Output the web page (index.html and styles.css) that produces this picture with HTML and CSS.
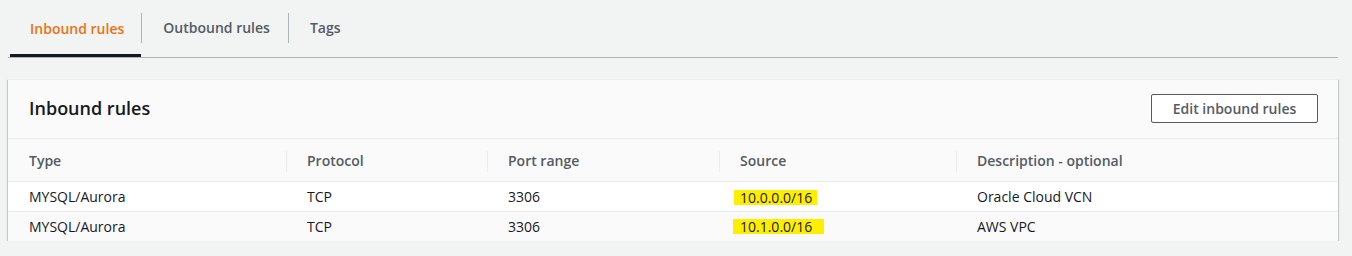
FILE: index.html
```html
<!DOCTYPE html>
<html lang="en">
<head>
    <meta charset="UTF-8">
    <title>Inbound rules</title>
    <link rel="stylesheet" href="styles.css">
</head>
<body>
    <div class="tabs">
        <div class="tab active">Inbound rules</div>
        <div class="tab">Outbound rules</div>
        <div class="tab">Tags</div>
    </div>

    <div class="card">
        <div class="card-header">
            <h2>Inbound rules</h2>
            <button class="btn">Edit inbound rules</button>
        </div>
        <table class="rules">
            <colgroup>
                <col class="c1"><col class="c2"><col class="c3"><col class="c4"><col class="c5">
            </colgroup>
            <thead>
                <tr>
                    <th>Type</th>
                    <th>Protocol</th>
                    <th>Port range</th>
                    <th>Source</th>
                    <th>Description - optional</th>
                </tr>
            </thead>
            <tbody>
                <tr>
                    <td>MYSQL/Aurora</td>
                    <td>TCP</td>
                    <td>3306</td>
                    <td><span class="mark mark-a">10.0.0.0/16</span></td>
                    <td>Oracle Cloud VCN</td>
                </tr>
                <tr>
                    <td>MYSQL/Aurora</td>
                    <td>TCP</td>
                    <td>3306</td>
                    <td><span class="mark mark-b">10.1.0.0/16</span></td>
                    <td>AWS VPC</td>
                </tr>
            </tbody>
        </table>
    </div>
</body>
</html>
```

FILE: styles.css
```css
body {
    margin: 0;
    padding: 0 14px 0 8px;
    background: #f2f3f3;
    font-family: "Open Sans", Roboto, Arial, sans-serif;
    font-size: 14px;
    color: #16191f;
}

.tabs {
    display: flex;
    height: 58px;
    border-bottom: 1px solid #aab7b8;
    box-sizing: border-box;
}

.tab {
    position: relative;
    display: flex;
    align-items: center;
    padding: 0 18px 1px 22px;
    font-weight: 600;
    color: #545b64;
    height: 56px;
    box-sizing: border-box;
}

.tab:first-child {
    margin-left: 2px;
    padding-left: 20px;
    padding-right: 17px;
}

.tab + .tab::before {
    content: "";
    position: absolute;
    left: 0;
    top: 13px;
    height: 30px;
    border-left: 1px solid #aab7b8;
}

.tab.active {
    color: #ec7211;
    border-bottom: 3px solid #16191f;
    padding-top: 4px;
    height: 57px;
}

.card {
    margin-top: 21px;
    background: #fff;
    border-top: 1px solid #eaeded;
    box-shadow: 0 1px 1px 0 rgba(0, 28, 36, 0.3), 1px 1px 1px 0 rgba(0, 28, 36, 0.15), -1px 1px 1px 0 rgba(0, 28, 36, 0.15);
    width: 1330px;
}

.card-header {
    display: flex;
    justify-content: space-between;
    align-items: center;
    height: 58px;
    padding: 0 20px 0 21px;
    background: #fafafa;
    border-bottom: 1px solid #eaeded;
}

.card-header h2 {
    margin: 0 0 2px;
    font-size: 18px;
    font-weight: 600;
}

.btn {
    width: 167px;
    height: 29px;
    padding: 0;
    background: #fff;
    border: 1px solid #545b64;
    border-radius: 2px;
    font-family: inherit;
    font-size: 14px;
    font-weight: 600;
    color: #545b64;
    margin-top: -1px;
}

.rules {
    width: 100%;
    border-collapse: collapse;
    table-layout: fixed;
}

.c1 { width: 278px; }
.c2 { width: 201px; }
.c3 { width: 232px; }
.c4 { width: 237px; }

.rules th {
    position: relative;
    height: 42px;
    padding: 0 0 0 21px;
    text-align: left;
    font-weight: 600;
    color: #545b64;
    background: #fafafa;
    border-bottom: 1px solid #eaeded;
}

.rules th + th::before {
    content: "";
    position: absolute;
    left: 0;
    top: 12px;
    height: 21px;
    border-left: 1px solid #eaeded;
}

.rules td {
    height: 29px;
    padding: 0 0 0 21px;
    border-bottom: 1px solid #eaeded;
}

.rules tbody tr:nth-child(2) td {
    background: #fafafa;
    border-bottom: none;
}

.mark {
    display: inline-block;
    line-height: 15px;
    background: #ffee00;
}

.mark-a {
    margin-left: -6px;
    padding: 0 5px 0 6px;
    position: relative;
    top: 1px;
}

.mark-b {
    margin-left: -7px;
    padding: 0 12px 0 7px;
}
```
